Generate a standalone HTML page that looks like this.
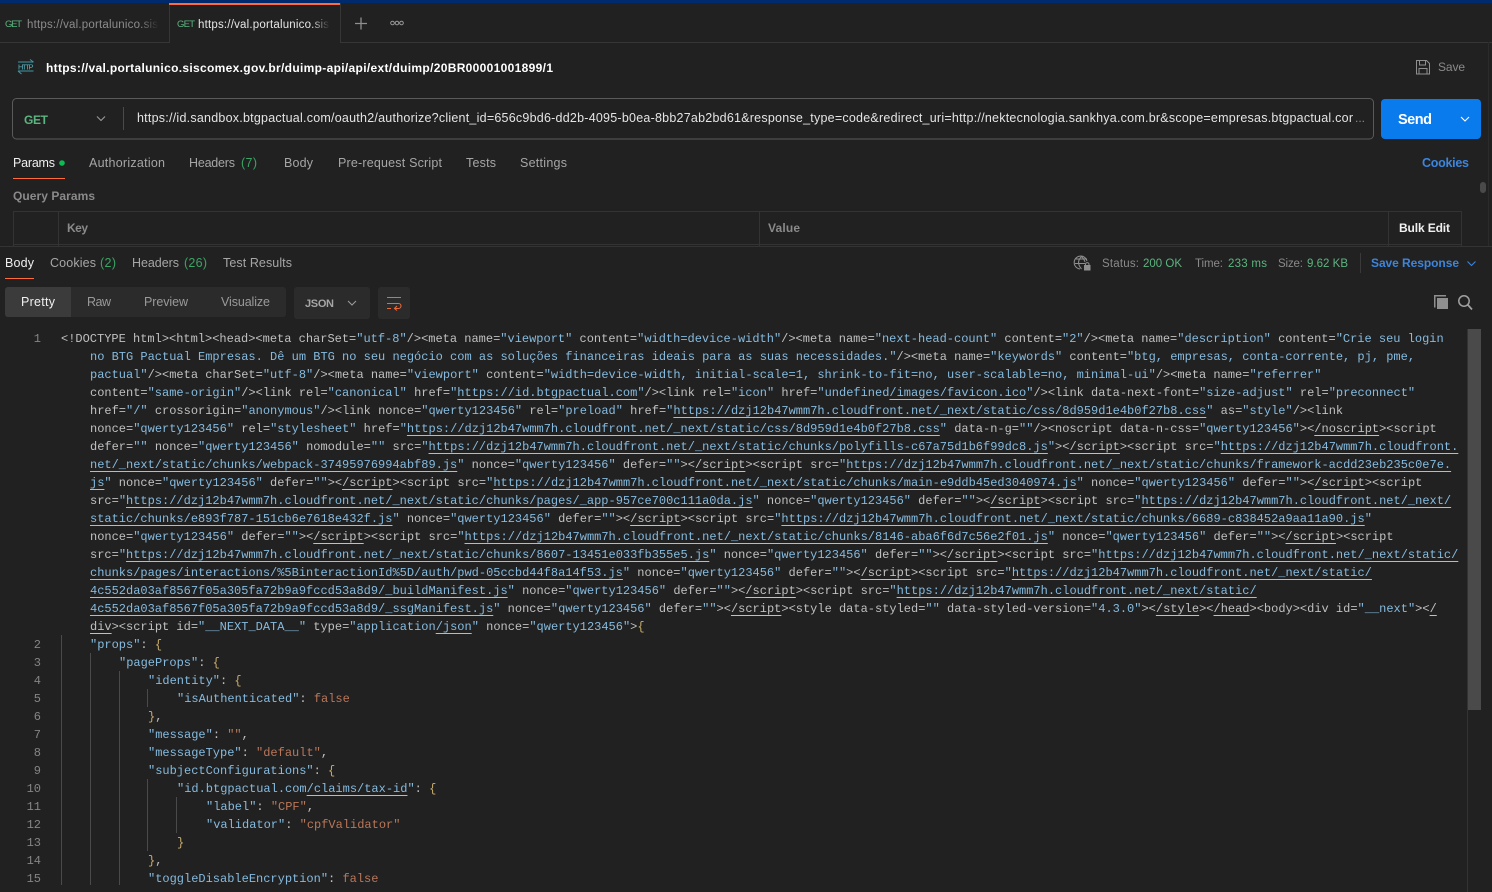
<!DOCTYPE html>
<html><head><meta charset="utf-8"><title>Postman</title>
<style>
html,body{margin:0;padding:0;width:1492px;height:892px;overflow:hidden;background:#212121}
svg{position:absolute;left:0;top:0}
text{font-family:"Liberation Sans",sans-serif;font-size:12.5px;fill:#a6a6a6}
.w{fill:#f0f0f0}.b{font-weight:bold}.g{fill:#5bb57f}.bl{fill:#3d85dc;font-weight:bold}.gn{fill:#3aa564}
#code{position:absolute;left:0;top:330px;width:1467px;height:562px;overflow:hidden;font:12px/18px "Liberation Mono",monospace;color:#c0c0c0}
#code div{position:absolute;white-space:pre;height:18px}
#code i{font-style:normal;color:#86bbdf}
#code u{color:#86bbdf;text-decoration:underline;text-decoration-color:#8cc8ee;text-underline-offset:3px;text-decoration-thickness:1px}
#code b{font-weight:normal;text-decoration:underline;text-underline-offset:3px;text-decoration-thickness:1px}
#code s{text-decoration:none;color:#c9ad6c}
#code em{font-style:normal;color:#b9775a}
#code span{position:absolute;left:0;width:41px;text-align:right;color:#858585}
</style></head><body>
<svg width="1492" height="892" viewBox="0 0 1492 892" xmlns="http://www.w3.org/2000/svg">
<defs>
<linearGradient id="fd" x1="0" x2="1" y1="0" y2="0"><stop offset="0" stop-color="#212121" stop-opacity="0"/><stop offset="1" stop-color="#212121"/></linearGradient>
</defs>
<rect x="0" y="0" width="1492" height="3" fill="#002a6e"/>
<!-- tab strip -->
<rect x="0" y="42" width="169" height="1" fill="#363636"/>
<rect x="340" y="42" width="1152" height="1" fill="#363636"/>
<rect x="169" y="3" width="1" height="40" fill="#363636"/>
<rect x="340" y="3" width="1" height="40" fill="#363636"/>
<rect x="169" y="3" width="171" height="2" fill="#ff6c37"/>
<text x="5" y="27" textLength="17" class="g" style="font-size:9.5px">GET</text>
<text x="27" y="28" textLength="131" style="font-size:11.5px;fill:#8c8c8c">https://val.portalunico.sis</text>
<rect x="140" y="14" width="19" height="20" fill="url(#fd)"/>
<text x="177" y="27" textLength="18" class="g" style="font-size:9.5px">GET</text>
<text x="198" y="28" textLength="131" style="font-size:11.5px;fill:#e6e6e6">https://val.portalunico.sis</text>
<rect x="311" y="14" width="19" height="20" fill="url(#fd)"/>
<path d="M361 17.5v12M355 23.5h12" stroke="#8f8f8f" stroke-width="1.3" fill="none"/>
<g fill="none" stroke="#9a9a9a" stroke-width="1"><circle cx="392.5" cy="23" r="1.8"/><circle cx="397" cy="23" r="1.8"/><circle cx="401.5" cy="23" r="1.8"/></g>
<!-- title -->
<g fill="none" stroke="#3c9aa8" stroke-width="1"><path d="M18 62h15.500M30 59.500l3.500 2.500M18 71h15.500M18 71l3.500 3"/></g>
<text x="18" y="69.500" textLength="15.500" style="font-size:7.500px;fill:#58b4c0">HTTP</text>
<text x="46" y="72" textLength="507" class="w b" style="font-size:12px;fill:#fff">https://val.portalunico.siscomex.gov.br/duimp-api/api/ext/duimp/20BR00001001899/1</text>
<path d="M1416.5 60.500h10l3 3v10.500h-13zM1419.500 60.500v4.500h6v-4.500M1419 74v-5.500h8v5.500" fill="none" stroke="#8f8f8f" stroke-width="1"/>
<text x="1438" y="71" textLength="27" style="font-size:12px;fill:#8a8a8a">Save</text>
<!-- url -->
<rect x="12.500" y="98.500" width="1361" height="40.500" rx="4" fill="#212121" stroke="#5a5a5a"/>
<text x="24" y="124" textLength="24" class="g b" style="font-size:12px">GET</text>
<path d="M97 116.500l4 4 4-4" fill="none" stroke="#9a9a9a" stroke-width="1.100"/>
<rect x="123" y="107" width="1" height="23" fill="#4a4a4a"/>
<text x="137" y="122" textLength="1216" style="font-size:12.500px;fill:#e4e4e4">https://id.sandbox.btgpactual.com/oauth2/authorize?client_id=656c9bd6-dd2b-4095-b0ea-8bb27ab2bd61&amp;response_type=code&amp;redirect_uri=http://nektecnologia.sankhya.com.br&amp;scope=empresas.btgpactual.cor</text>
<text x="1355" y="122" textLength="10" style="font-size:12px;fill:#8a8a8a">...</text>
<rect x="1381" y="99" width="100" height="40" rx="4" fill="#097bed"/>
<text x="1398" y="124" textLength="34" class="b" style="font-size:14.500px;fill:#fff">Send</text>
<path d="M1461 117l4 4 4-4" fill="none" stroke="#fff" stroke-width="1.100"/>
<!-- request tabs -->
<text x="13" y="167" textLength="42" class="w">Params</text>
<circle cx="62" cy="163" r="2.800" fill="#0cbb52"/>
<rect x="13" y="178" width="52" height="1" fill="#ff6c37"/>
<text x="89" y="167" textLength="76">Authorization</text>
<text x="189" y="167" textLength="46">Headers</text>
<text x="241" y="167" textLength="16" class="gn">(7)</text>
<text x="284" y="167" textLength="29">Body</text>
<text x="338" y="167" textLength="104">Pre-request Script</text>
<text x="466" y="167" textLength="30">Tests</text>
<text x="520" y="167" textLength="47">Settings</text>
<text x="1422" y="167" textLength="47" class="bl">Cookies</text>
<text x="13" y="200" textLength="82" class="b" style="fill:#8a8a8a;font-size:12px">Query Params</text>
<rect x="1480" y="182" width="6" height="11" rx="3" fill="#4a4a4a"/>
<rect x="1488" y="42" width="1" height="204" fill="#2b2b2b"/>
<!-- table -->
<g fill="#333333"><rect x="13" y="211" width="1449" height="1"/><rect x="13" y="211" width="1" height="35"/><rect x="58" y="211" width="1" height="35"/><rect x="759" y="211" width="1" height="35"/><rect x="1388" y="211" width="1" height="35"/><rect x="1461" y="211" width="1" height="35"/><rect x="13" y="244" width="1449" height="1"/><rect x="0" y="246" width="1492" height="1"/></g>
<text x="67" y="232" textLength="21" class="b" style="fill:#8a8a8a;font-size:12px">Key</text>
<text x="768" y="232" textLength="32" class="b" style="fill:#8a8a8a;font-size:12px">Value</text>
<text x="1399" y="232" textLength="51" class="b" style="fill:#f0f0f0;font-size:12px">Bulk Edit</text>
<!-- response tabs -->
<text x="5" y="267" textLength="29" class="w">Body</text>
<rect x="5" y="278" width="29" height="1" fill="#ff6c37"/>
<text x="50" y="267" textLength="46">Cookies</text>
<text x="100" y="267" textLength="16" class="gn">(2)</text>
<text x="132" y="267" textLength="47">Headers</text>
<text x="184" y="267" textLength="23" class="gn">(26)</text>
<text x="223" y="267" textLength="69">Test Results</text>
<!-- status -->
<g fill="none" stroke="#8f8f8f" stroke-width="1"><path d="M1087 261a6.500 6.500 0 1 0-7 8"/><path d="M1075 263.500h10M1076 259h11M1081.500 256.500c-4 4-4 8 0 12.500M1081.500 256.500c2 2 3 3.500 3.500 5.500"/><rect x="1084.500" y="265.500" width="5.500" height="4.500" fill="#8f8f8f"/><path d="M1085.500 265.500v-1.500a1.800 1.800 0 0 1 3.500 0v1.500"/></g>
<text x="1102" y="267" textLength="37" style="font-size:11.500px;fill:#8a8a8a">Status:</text>
<text x="1143" y="267" textLength="39" style="font-size:11.500px" class="g">200 OK</text>
<text x="1195" y="267" textLength="28" style="font-size:11.500px;fill:#8a8a8a">Time:</text>
<text x="1228" y="267" textLength="39" style="font-size:11.500px" class="g">233 ms</text>
<text x="1278" y="267" textLength="25" style="font-size:11.500px;fill:#8a8a8a">Size:</text>
<text x="1307" y="267" textLength="41" style="font-size:11.500px" class="g">9.62 KB</text>
<rect x="1360" y="253" width="1" height="20" fill="#3a3a3a"/>
<text x="1371" y="267" textLength="88" class="bl" style="font-size:12px">Save Response</text>
<path d="M1467.500 261.500l4 4 4-4" fill="none" stroke="#3d85dc" stroke-width="1.100"/>
<!-- pretty bar -->
<rect x="5" y="287" width="281" height="30" rx="3" fill="#2b2b2b"/>
<path d="M8 287h63v30H8a3 3 0 0 1-3-3v-24a3 3 0 0 1 3-3z" fill="#3b3b3b"/>
<text x="21" y="306" textLength="34" class="w">Pretty</text>
<text x="87" y="306" textLength="24" style="fill:#9a9a9a">Raw</text>
<text x="144" y="306" textLength="44" style="fill:#9a9a9a">Preview</text>
<text x="221" y="306" textLength="49" style="fill:#9a9a9a">Visualize</text>
<rect x="294" y="287" width="76" height="32" rx="3" fill="#2b2b2b"/>
<text x="305" y="307" textLength="29" class="b" style="fill:#a6a6a6;font-size:11px">JSON</text>
<path d="M348 301l4 4 4-4" fill="none" stroke="#9a9a9a" stroke-width="1.100"/>
<rect x="378" y="287" width="32" height="32" rx="3" fill="#2b2b2b"/>
<path d="M387 297.500h14M387 303.500h11.500a2.500 2.500 0 0 1 0 5h-3.500M397 306l-2.500 2.500 2.500 2M387 308.500h4" fill="none" stroke="#e8693a" stroke-width="1.100"/>
<path d="M1434 295h12v1.500h-10.500v11h-1.500z" fill="#8f8f8f"/><rect x="1437" y="298" width="11" height="11" fill="#8f8f8f"/>
<circle cx="1464" cy="301" r="5.200" fill="none" stroke="#a0a0a0" stroke-width="1.500"/><path d="M1468 305l4 4.500" stroke="#a0a0a0" stroke-width="1.700"/>
<!-- scrollbar -->
<rect x="1467" y="329" width="14" height="381" fill="#4a4a4a"/>
<rect x="1467" y="329" width="1" height="563" fill="#333"/>
<!-- indent guides -->
<g fill="#4a4a4a"><rect x="61" y="635" width="1" height="250"/><rect x="90" y="653" width="1" height="232"/><rect x="119" y="671" width="1" height="214"/><rect x="147" y="689" width="1" height="18"/><rect x="147" y="779" width="1" height="72"/><rect x="176" y="797" width="1" height="36"/></g>
</svg>
<div id="code">
<span style="top:0">1</span>
<div style="left:61px;top:0">&lt;!DOCTYPE html&gt;&lt;html&gt;&lt;head&gt;&lt;meta charSet=<i>"utf-8"</i>/&gt;&lt;meta name=<i>"viewport"</i> content=<i>"width=device-width"</i>/&gt;&lt;meta name=<i>"next-head-count"</i> content=<i>"2"</i>/&gt;&lt;meta name=<i>"description"</i> content=<i>"Crie seu login</i></div>
<div style="left:90px;top:18px"><i>no BTG Pactual Empresas. Dê um BTG no seu negócio com as soluções financeiras ideais para as suas necessidades."</i>/&gt;&lt;meta name=<i>"keywords"</i> content=<i>"btg, empresas, conta-corrente, pj, pme,</i></div>
<div style="left:90px;top:36px"><i>pactual"</i>/&gt;&lt;meta charSet=<i>"utf-8"</i>/&gt;&lt;meta name=<i>"viewport"</i> content=<i>"width=device-width, initial-scale=1, shrink-to-fit=no, user-scalable=no, minimal-ui"</i>/&gt;&lt;meta name=<i>"referrer"</i></div>
<div style="left:90px;top:54px">content=<i>"same-origin"</i>/&gt;&lt;link rel=<i>"canonical"</i> href=<i>"</i><u>https://id.btgpactual.com</u><i>"</i>/&gt;&lt;link rel=<i>"icon"</i> href=<i>"undefined</i><u>/images/favicon.ico</u><i>"</i>/&gt;&lt;link data-next-font=<i>"size-adjust"</i> rel=<i>"preconnect"</i></div>
<div style="left:90px;top:72px">href=<i>"/"</i> crossorigin=<i>"anonymous"</i>/&gt;&lt;link nonce=<i>"qwerty123456"</i> rel=<i>"preload"</i> href=<i>"</i><u>https://dzj12b47wmm7h.cloudfront.net/_next/static/css/8d959d1e4b0f27b8.css</u><i>"</i> as=<i>"style"</i>/&gt;&lt;link</div>
<div style="left:90px;top:90px">nonce=<i>"qwerty123456"</i> rel=<i>"stylesheet"</i> href=<i>"</i><u>https://dzj12b47wmm7h.cloudfront.net/_next/static/css/8d959d1e4b0f27b8.css</u><i>"</i> data-n-g=<i>""</i>/&gt;&lt;noscript data-n-css=<i>"qwerty123456"</i>&gt;&lt;<b>/noscript</b>&gt;&lt;script</div>
<div style="left:90px;top:108px">defer=<i>""</i> nonce=<i>"qwerty123456"</i> nomodule=<i>""</i> src=<i>"</i><u>https://dzj12b47wmm7h.cloudfront.net/_next/static/chunks/polyfills-c67a75d1b6f99dc8.js</u><i>"</i>&gt;&lt;<b>/script</b>&gt;&lt;script src=<i>"</i><u>https://dzj12b47wmm7h.cloudfront.</u></div>
<div style="left:90px;top:126px"><u>net/_next/static/chunks/webpack-37495976994abf89.js</u><i>"</i> nonce=<i>"qwerty123456"</i> defer=<i>""</i>&gt;&lt;<b>/script</b>&gt;&lt;script src=<i>"</i><u>https://dzj12b47wmm7h.cloudfront.net/_next/static/chunks/framework-acdd23eb235c0e7e.</u></div>
<div style="left:90px;top:144px"><u>js</u><i>"</i> nonce=<i>"qwerty123456"</i> defer=<i>""</i>&gt;&lt;<b>/script</b>&gt;&lt;script src=<i>"</i><u>https://dzj12b47wmm7h.cloudfront.net/_next/static/chunks/main-e9ddb45ed3040974.js</u><i>"</i> nonce=<i>"qwerty123456"</i> defer=<i>""</i>&gt;&lt;<b>/script</b>&gt;&lt;script</div>
<div style="left:90px;top:162px">src=<i>"</i><u>https://dzj12b47wmm7h.cloudfront.net/_next/static/chunks/pages/_app-957ce700c111a0da.js</u><i>"</i> nonce=<i>"qwerty123456"</i> defer=<i>""</i>&gt;&lt;<b>/script</b>&gt;&lt;script src=<i>"</i><u>https://dzj12b47wmm7h.cloudfront.net/_next/</u></div>
<div style="left:90px;top:180px"><u>static/chunks/e893f787-151cb6e7618e432f.js</u><i>"</i> nonce=<i>"qwerty123456"</i> defer=<i>""</i>&gt;&lt;<b>/script</b>&gt;&lt;script src=<i>"</i><u>https://dzj12b47wmm7h.cloudfront.net/_next/static/chunks/6689-c838452a9aa11a90.js</u><i>"</i></div>
<div style="left:90px;top:198px">nonce=<i>"qwerty123456"</i> defer=<i>""</i>&gt;&lt;<b>/script</b>&gt;&lt;script src=<i>"</i><u>https://dzj12b47wmm7h.cloudfront.net/_next/static/chunks/8146-aba6f6d7c56e2f01.js</u><i>"</i> nonce=<i>"qwerty123456"</i> defer=<i>""</i>&gt;&lt;<b>/script</b>&gt;&lt;script</div>
<div style="left:90px;top:216px">src=<i>"</i><u>https://dzj12b47wmm7h.cloudfront.net/_next/static/chunks/8607-13451e033fb355e5.js</u><i>"</i> nonce=<i>"qwerty123456"</i> defer=<i>""</i>&gt;&lt;<b>/script</b>&gt;&lt;script src=<i>"</i><u>https://dzj12b47wmm7h.cloudfront.net/_next/static/</u></div>
<div style="left:90px;top:234px"><u>chunks/pages/interactions/%5BinteractionId%5D/auth/pwd-05ccbd44f8a14f53.js</u><i>"</i> nonce=<i>"qwerty123456"</i> defer=<i>""</i>&gt;&lt;<b>/script</b>&gt;&lt;script src=<i>"</i><u>https://dzj12b47wmm7h.cloudfront.net/_next/static/</u></div>
<div style="left:90px;top:252px"><u>4c552da03af8567f05a305fa72b9a9fccd53a8d9/_buildManifest.js</u><i>"</i> nonce=<i>"qwerty123456"</i> defer=<i>""</i>&gt;&lt;<b>/script</b>&gt;&lt;script src=<i>"</i><u>https://dzj12b47wmm7h.cloudfront.net/_next/static/</u></div>
<div style="left:90px;top:270px"><u>4c552da03af8567f05a305fa72b9a9fccd53a8d9/_ssgManifest.js</u><i>"</i> nonce=<i>"qwerty123456"</i> defer=<i>""</i>&gt;&lt;<b>/script</b>&gt;&lt;style data-styled=<i>""</i> data-styled-version=<i>"4.3.0"</i>&gt;&lt;<b>/style</b>&gt;&lt;<b>/head</b>&gt;&lt;body&gt;&lt;div id=<i>"__next"</i>&gt;&lt;<b>/</b></div>
<div style="left:90px;top:288px"><b>div</b>&gt;&lt;script id=<i>"__NEXT_DATA__"</i> type=<i>"application</i><u>/json</u><i>"</i> nonce=<i>"qwerty123456"</i>&gt;<s>{</s></div>
<span style="top:306px">2</span><div style="left:90px;top:306px"><i>"props"</i>: <s>{</s></div>
<span style="top:324px">3</span><div style="left:119px;top:324px"><i>"pageProps"</i>: <s>{</s></div>
<span style="top:342px">4</span><div style="left:148px;top:342px"><i>"identity"</i>: <s>{</s></div>
<span style="top:360px">5</span><div style="left:177px;top:360px"><i>"isAuthenticated"</i>: <em>false</em></div>
<span style="top:378px">6</span><div style="left:148px;top:378px"><s>}</s>,</div>
<span style="top:396px">7</span><div style="left:148px;top:396px"><i>"message"</i>: <em>""</em>,</div>
<span style="top:414px">8</span><div style="left:148px;top:414px"><i>"messageType"</i>: <em>"default"</em>,</div>
<span style="top:432px">9</span><div style="left:148px;top:432px"><i>"subjectConfigurations"</i>: <s>{</s></div>
<span style="top:450px">10</span><div style="left:177px;top:450px"><i>"id.btgpactual.com</i><u>/claims/tax-id</u><i>"</i>: <s>{</s></div>
<span style="top:468px">11</span><div style="left:206px;top:468px"><i>"label"</i>: <em>"CPF"</em>,</div>
<span style="top:486px">12</span><div style="left:206px;top:486px"><i>"validator"</i>: <em>"cpfValidator"</em></div>
<span style="top:504px">13</span><div style="left:177px;top:504px"><s>}</s></div>
<span style="top:522px">14</span><div style="left:148px;top:522px"><s>}</s>,</div>
<span style="top:540px">15</span><div style="left:148px;top:540px"><i>"toggleDisableEncryption"</i>: <em>false</em></div>
</div>
</body></html>
